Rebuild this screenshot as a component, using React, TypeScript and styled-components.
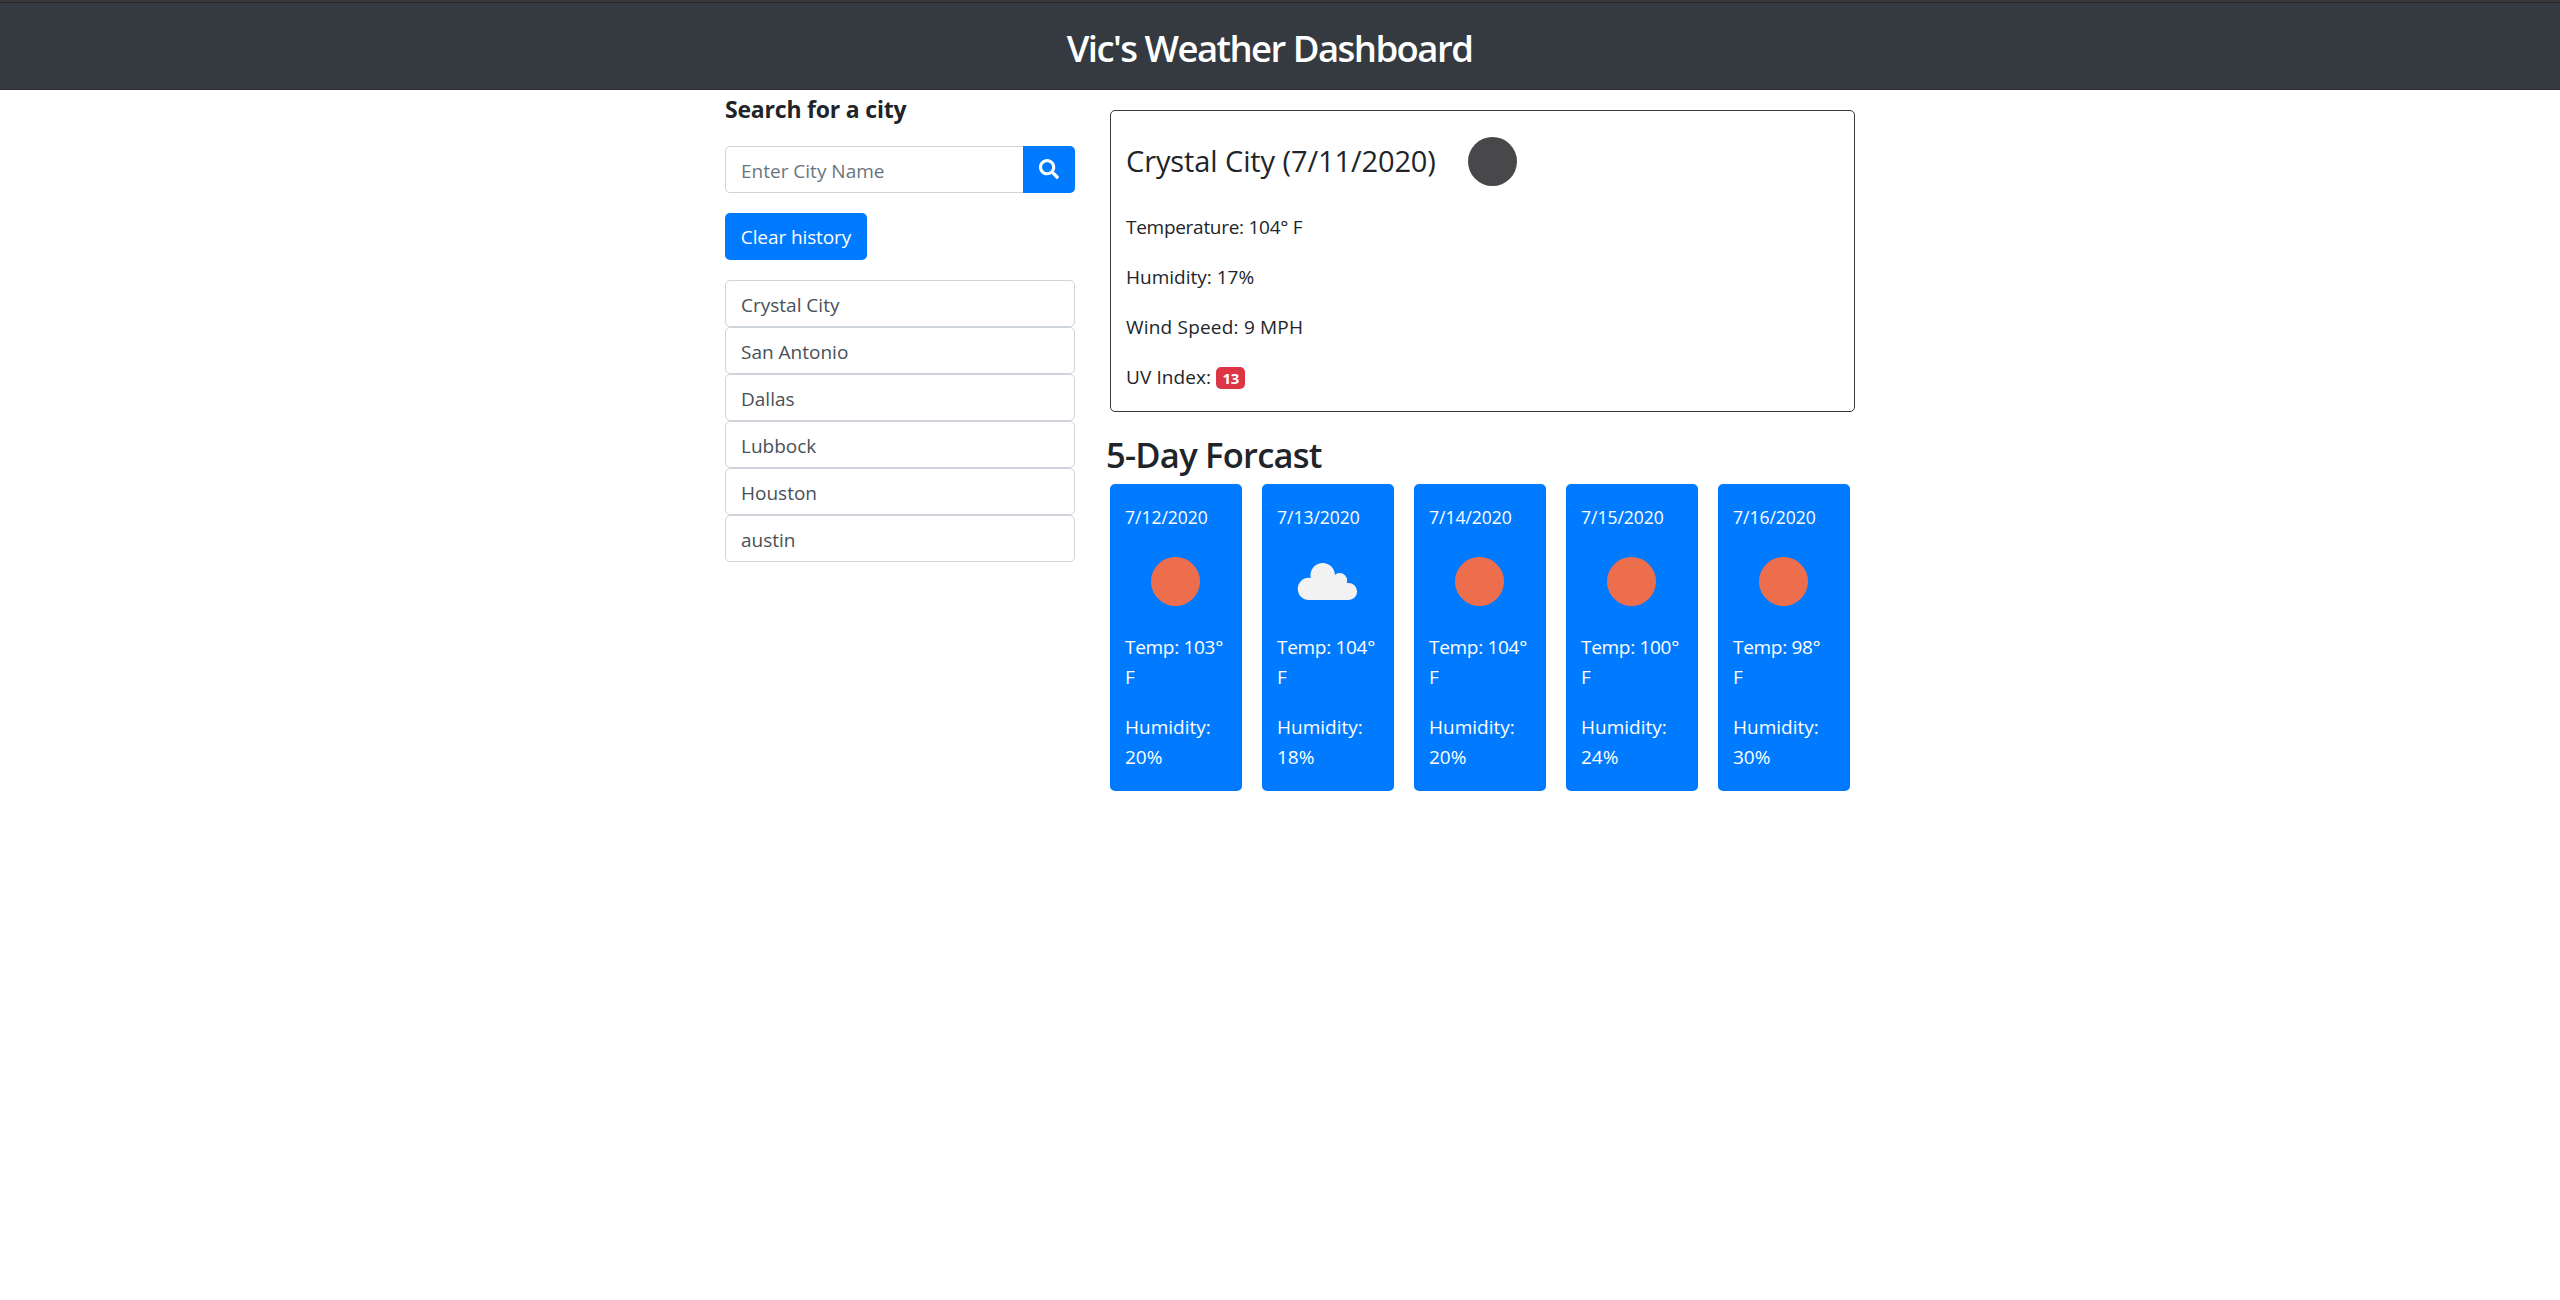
import React from "react";
import styled, { createGlobalStyle } from "styled-components";

const GlobalStyle = createGlobalStyle`
  *, *::before, *::after { box-sizing: border-box; }
  body {
    margin: 0;
    background: #fff;
    color: #212529;
    font-family: "Open Sans", "Noto Sans", sans-serif;
    font-size: 19px;
    line-height: 30px;
    letter-spacing: 0;
  }
  h1, h2, h3, p { margin: 0; }
`;

const Header = styled.header`
  height: 90px;
  padding: 16px 21px 0 0;
  border-top: 2px solid #38383c;
  border-bottom: 1px solid #2d3136;
  background: #343a40;
  box-shadow: inset 0 1px 0 #262728;
  text-align: center;
`;

const Title = styled.h1`
  color: #fff;
  font-size: 36.5px;
  font-weight: 600;
  line-height: 60px;
  letter-spacing: -1.55px;
`;

const Main = styled.main`
  display: flex;
  gap: 32px;
  width: 1130px;
  margin-left: 725px;
`;

const Sidebar = styled.aside`
  width: 350px;
`;

const SearchTitle = styled.h2`
  padding-top: 2px;
  font-size: 23px;
  font-weight: 700;
  line-height: 34px;
  letter-spacing: -0.2px;
`;

const SearchForm = styled.form`
  display: flex;
  height: 47px;
  margin-top: 20px;
`;

const SearchInput = styled.input`
  flex: 1;
  min-width: 0;
  padding: 2px 15px 0;
  border: 1px solid #ced4da;
  border-right: 0;
  border-radius: 5px 0 0 5px;
  font: inherit;
  letter-spacing: inherit;
  outline: none;
  &::placeholder { color: #6c757d; opacity: 1; }
`;

const SearchButton = styled.button`
  display: flex;
  align-items: center;
  justify-content: center;
  width: 52px;
  padding: 0 0 1px;
  border: 0;
  border-radius: 0 5px 5px 0;
  background: #007bff;
  color: #fff;
`;

const ClearButton = styled.button`
  display: block;
  width: 142px;
  height: 47px;
  margin: 20px 0;
  padding: 0;
  border: 0;
  border-radius: 5px;
  background: #007bff;
  color: #fff;
  font: inherit;
  letter-spacing: -0.1px;
`;

const History = styled.ul`
  margin: 0;
  padding: 0;
  list-style: none;
`;

const HistoryItem = styled.li`
  height: 47px;
  padding: 9px 15px 0;
  border: 1px solid #ced4da;
  border-radius: 5px;
  color: #495057;
`;

const Content = styled.section`
  flex: 1;
  min-width: 0;
`;

const CurrentCard = styled.article`
  height: 302px;
  margin: 20px 0 0 3px;
  padding: 0 15px;
  border: 1px solid #343a40;
  border-radius: 5px;
`;

const CurrentHeading = styled.div`
  display: flex;
  align-items: center;
  height: 101px;
`;

const CityName = styled.h2`
  width: 329px;
  padding-bottom: 2px;
  font-size: 29px;
  font-weight: 400;
  line-height: 40px;
  letter-spacing: -0.1px;
  white-space: nowrap;
`;

const Reading = styled.p<{ $tracking?: number }>`
  height: 30px;
  margin-bottom: 20px;
  letter-spacing: ${(p) => p.$tracking ?? 0}px;
`;

const Badge = styled.span`
  display: inline-block;
  width: 29px;
  height: 22px;
  border-radius: 5px;
  background: #dc3545;
  color: #fff;
  font-size: 15px;
  font-weight: 700;
  line-height: 23px;
  letter-spacing: -0.4px;
  text-align: center;
`;

const ForecastTitle = styled.h2`
  height: 52px;
  margin-top: 20px;
  margin-left: -1px;
  font-size: 34.5px;
  font-weight: 600;
  line-height: 45px;
  letter-spacing: -0.75px;
`;

const Forecast = styled.div`
  display: flex;
  gap: 20px;
  margin-left: 3px;
`;

const Day = styled.article`
  width: 132px;
  height: 307px;
  padding: 18px 16px 0 15px;
  border-radius: 5px;
  background: #007bff;
  color: #fff;
`;

const DayDate = styled.h3`
  font-size: 17.5px;
  font-weight: 400;
  line-height: 30px;
  letter-spacing: 0;
`;

const DayIcon = styled.div`
  display: flex;
  justify-content: center;
  height: 100px;
  padding-top: 12px;
`;

const DayReading = styled.p<{ $tracking?: number }>`
  margin-bottom: 20px;
  letter-spacing: ${(p) => p.$tracking ?? 0}px;
`;

function SunIcon({ color }: { color: string }) {
  return (
    <svg width="75" height="75" viewBox="0 0 75 75">
      <circle cx="37.5" cy="37.5" r="24.5" fill={color} />
    </svg>
  );
}

function CloudIcon() {
  return (
    <svg width="75" height="75" viewBox="0 0 75 75" fill="#f2f2f2">
      <circle cx="18.9" cy="44.9" r="11.1" />
      <circle cx="32.7" cy="31.2" r="12.2" />
      <circle cx="49.7" cy="36.4" r="7.4" />
      <circle cx="58.6" cy="47.5" r="8.5" />
      <path d="M18.9 34H32L49 32L58.6 40V56H18.9Z" />
    </svg>
  );
}

function SearchIcon() {
  return (
    <svg width="20" height="20" viewBox="0 0 512 512" fill="currentColor">
      <path d="M505 442.7L405.3 343c-4.5-4.5-10.6-7-17-7H372c27.6-35.3 44-79.7 44-128C416 93.1 322.9 0 208 0S0 93.1 0 208s93.1 208 208 208c48.3 0 92.7-16.4 128-44v16.3c0 6.4 2.5 12.5 7 17l99.7 99.7c9.4 9.4 24.6 9.4 33.9 0l28.3-28.3c9.4-9.4 9.4-24.6.1-34zM208 336c-70.7 0-128-57.2-128-128 0-70.7 57.2-128 128-128 70.7 0 128 57.2 128 128 0 70.7-57.2 128-128 128z" />
    </svg>
  );
}

const cities = ["Crystal City", "San Antonio", "Dallas", "Lubbock", "Houston", "austin"];

const days = [
  { date: "7/12/2020", sky: "clear", temp: 103, humidity: 20 },
  { date: "7/13/2020", sky: "clouds", temp: 104, humidity: 18 },
  { date: "7/14/2020", sky: "clear", temp: 104, humidity: 20 },
  { date: "7/15/2020", sky: "clear", temp: 100, humidity: 24 },
  { date: "7/16/2020", sky: "clear", temp: 98, humidity: 30 },
];

export default function App() {
  return (
    <>
      <GlobalStyle />
      <Header>
        <Title>Vic's Weather Dashboard</Title>
      </Header>
      <Main>
        <Sidebar>
          <SearchTitle>Search for a city</SearchTitle>
          <SearchForm onSubmit={(e) => e.preventDefault()}>
            <SearchInput placeholder="Enter City Name" />
            <SearchButton aria-label="Search">
              <SearchIcon />
            </SearchButton>
          </SearchForm>
          <ClearButton>Clear history</ClearButton>
          <History>
            {cities.map((city) => (
              <HistoryItem key={city}>{city}</HistoryItem>
            ))}
          </History>
        </Sidebar>
        <Content>
          <CurrentCard>
            <CurrentHeading>
              <CityName>Crystal City (7/11/2020)</CityName>
              <SunIcon color="#48484a" />
            </CurrentHeading>
            <Reading $tracking={-0.28}>Temperature: 104° F</Reading>
            <Reading>Humidity: 17%</Reading>
            <Reading $tracking={0.2}>Wind Speed: 9 MPH</Reading>
            <Reading $tracking={0.1}>
              UV Index: <Badge>13</Badge>
            </Reading>
          </CurrentCard>
          <ForecastTitle>5-Day Forcast</ForecastTitle>
          <Forecast>
            {days.map((day) => (
              <Day key={day.date}>
                <DayDate>{day.date}</DayDate>
                <DayIcon>{day.sky === "clouds" ? <CloudIcon /> : <SunIcon color="#ec6e4c" />}</DayIcon>
                <DayReading $tracking={-0.3}>{`Temp: ${day.temp}° F`}</DayReading>
                <DayReading>{`Humidity: ${day.humidity}%`}</DayReading>
              </Day>
            ))}
          </Forecast>
        </Content>
      </Main>
    </>
  );
}
